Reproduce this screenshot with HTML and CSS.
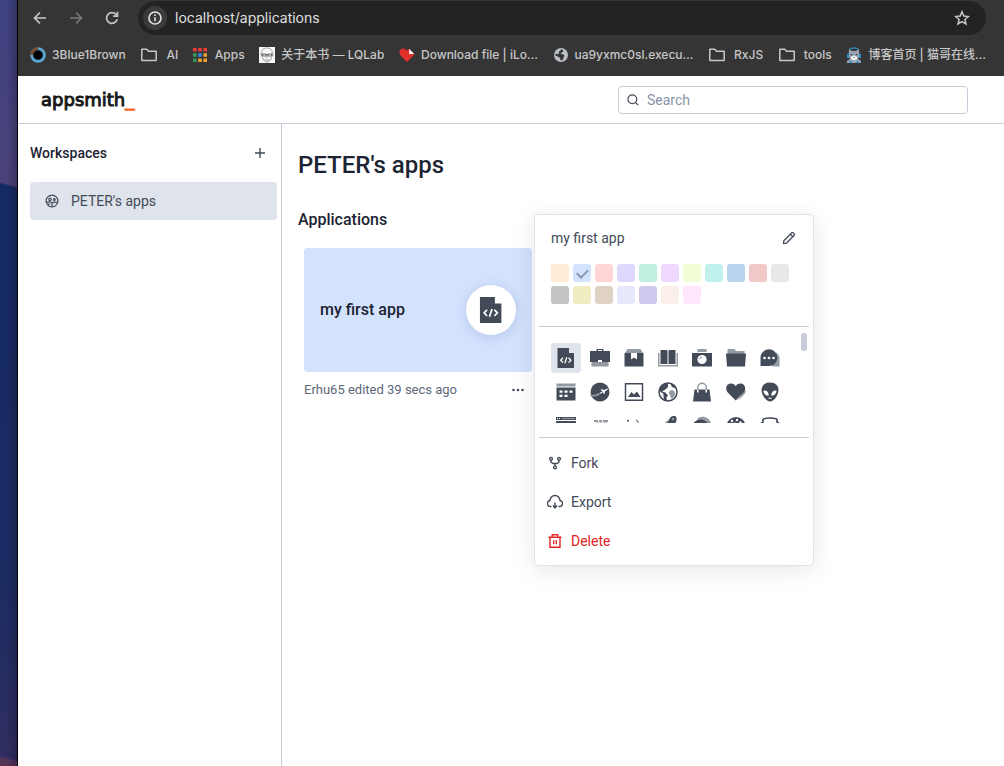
FILE: index.html
```html
<!DOCTYPE html>
<html lang="en">
<head>
<meta charset="utf-8">
<meta name="viewport" content="width=device-width, initial-scale=1">
<title>Applications | Appsmith</title>
<link rel="stylesheet" href="styles.css">
</head>
<body>
<div class="desktop" aria-hidden="true"></div>
<div class="window">
  <div class="chrome">
    <div class="toolbar">
      <div class="nav-group">
        <button class="nav-btn" aria-label="Back"><svg width="16" height="16" viewBox="0 0 16 16" fill="none" stroke="currentColor" stroke-width="1.7"><path d="M14 8H3M8 2.5 2.5 8 8 13.5"/></svg></button>
        <button class="nav-btn nav-btn-off" aria-label="Forward" disabled><svg width="16" height="16" viewBox="0 0 16 16" fill="none" stroke="currentColor" stroke-width="1.7"><path d="M2 8h11M8 2.5 13.5 8 8 13.5"/></svg></button>
        <button class="nav-btn" aria-label="Reload"><svg width="16" height="16" viewBox="0 0 16 16" fill="none" stroke="currentColor" stroke-width="1.7"><path d="M13.2 9.3A5.4 5.4 0 1 1 11.8 4.2L13.4 5.8"/><path d="M13.5 1.8v4.4H9.1"/></svg></button>
      </div>
      <div class="omnibox">
        <button class="site-info" aria-label="Site information"><svg width="14" height="14" viewBox="0 0 14 14" fill="none" stroke="currentColor" stroke-width="1.6"><circle cx="7" cy="7" r="6"/><path d="M7 6.2v4M7 3.6v1.5"/></svg></button>
        <input class="address" aria-label="Address" value="localhost/applications">
        <button class="star" aria-label="Bookmark this tab"><svg width="16" height="16" viewBox="0 0 16 16" fill="none" stroke="currentColor" stroke-width="1.5"><path d="m8 1.8 1.8 4.3 4.6.4-3.5 3 1.1 4.5L8 11.6 4 14l1.1-4.5-3.5-3 4.6-.4z"/></svg></button>
      </div>
    </div>
    <nav class="bookmarks" aria-label="Bookmarks">
      <a href="#"><svg width="16" height="16" viewBox="0 0 16 16"><circle cx="8" cy="8" r="6.300" fill="#000" stroke="#5aa7cf" stroke-width="3"/><path d="M1.700 8A6.300 6.300 0 0 1 8 1.700" fill="none" stroke="#7b4a2b" stroke-width="3"/><circle cx="8" cy="8" r="4.600" fill="#000" stroke="#173447"/></svg>3Blue1Brown</a>
      <a href="#" class="folder"><svg width="18" height="16" viewBox="0 0 18 16" fill="none" stroke="currentColor" stroke-width="1.5"><path d="M1.800 2.300h5l1.700 2h7.700v9.200H1.800z" stroke-linejoin="round"/></svg>AI</a>
      <a href="#" class="folder"><svg width="14" height="14" viewBox="0 0 14 14"><path fill="#ea3b34" d="M0 0h3.600v3.600H0zM5.200 0h3.600v3.600H5.200zM10.400 0H14v3.600h-3.600z"/><path fill="#2f9a57" d="M0 5.200h3.600v3.600H0zM0 10.400h3.600V14H0z"/><path fill="#3b82e8" d="M5.200 5.200h3.600v3.600H5.200z"/><path fill="#f0a030" d="M10.400 5.200H14v3.600h-3.600zM5.200 10.400h3.600V14H5.200zM10.400 10.400H14V14h-3.600z"/></svg>Apps</a>
      <a href="#"><svg width="16" height="16" viewBox="0 0 16 16"><path fill="#f8f8f8" d="M0 0h16v16H0z"/><g fill="none" stroke="#777" stroke-width=".7"><path d="M3 8C1.800 3 4.500 1 8 1s6.200 2 5 7c-.3 4-2.500 7-5 7s-4.700-3-5-7zM1.500 6.500l1.500 3M14.500 6.500 13 9.500M5.500 12.500c2 1 3 1 5 0M8 8l-.5 2.500h1.200"/><path stroke="#333" d="M3 7h4v2H4zM9 7h4l-1 2H9zM7 7.500h2"/></g></svg>关于本书 — LQLab</a>
      <a href="#"><svg width="16" height="16" viewBox="0 0 16 16"><path fill="#e2302c" d="M8 15 1.500 8.500C-.8 5.500.7 1.500 4 1.500c2 0 3.200 1 4 2.300.6-1.200 1.400-1.800 2.300-2.100L15.500 7 14 9z"/><path fill="#fff" d="M10.200 2v4.900h5z"/></svg>Download file | iLo…</a>
      <a href="#"><svg width="16" height="16" viewBox="0 0 16 16"><circle cx="8" cy="8" r="7" fill="#b9bec5"/><path fill="#353535" d="M7.500 2.200c2 .2 3 1 2.600 2.200-.4 1-2 .8-2.400 1.700-.3.900 1.500 1 2.700 1.400 1.300.5 1 1.700.4 2.500-.6.900-.4 2.100-1.400 2.900C8 13.600 7 13 7.200 11.900c.2-1-.7-1.300-1.500-1.800C4.600 9.400 3.300 9 2.200 8l.2-1.300c1.200.1 2.400 1 3.300.3.500-.5-.2-1.200.1-2C6.200 4 7.700 4 7.600 3.200z"/></svg>ua9yxmc0sl.execu…</a>
      <a href="#" class="folder"><svg width="18" height="16" viewBox="0 0 18 16" fill="none" stroke="currentColor" stroke-width="1.5"><path d="M1.800 2.300h5l1.700 2h7.700v9.200H1.800z" stroke-linejoin="round"/></svg>RxJS</a>
      <a href="#" class="folder"><svg width="18" height="16" viewBox="0 0 18 16" fill="none" stroke="currentColor" stroke-width="1.5"><path d="M1.800 2.300h5l1.700 2h7.700v9.200H1.800z" stroke-linejoin="round"/></svg>tools</a>
      <a href="#"><svg width="16" height="16" viewBox="0 0 16 16"><path d="M3.500 2Q8 0 12.500 2" fill="none" stroke="#2a86b0" stroke-width="1.3"/><path fill="#9aa4b5" d="m3 2 3 2h4l3-2 .5 7L12 12l3 2v2H1v-2l3-2-1.500-3z"/><path fill="#2491c4" d="M1 7h2v4H1zM13 7h2v4h-2zM3.500 14h2v2h-2zM10.500 14h2v2h-2z"/><path fill="#f4f5f8" d="m5 10 3-1.500 3 1.500v2l-3 1.500L5 12z"/><path fill="#262b35" d="M4.800 7h1.500v1.300H4.800zM9.700 7h1.500v1.300H9.700zM7.400 10h1.200v.8H7.400z"/></svg>博客首页 | 猫哥在线…</a>
    </nav>
  </div>

  <header class="app-header">
    <a class="logo" href="#">appsmith<span>_</span></a>
    <label class="search">
      <svg width="12" height="12" viewBox="0 0 12 12" fill="none" stroke="currentColor" stroke-width="1.2"><circle cx="5.300" cy="5.300" r="4.400"/><path d="m8.500 8.500 2.700 2.700"/></svg>
      <input type="search" placeholder="Search" aria-label="Search">
    </label>
  </header>

  <div class="app-body">
    <aside class="sidebar">
      <div class="sidebar-head">
        <h2>Workspaces</h2>
        <button class="add" aria-label="Create workspace"><svg width="12" height="12" viewBox="0 0 12 12" stroke="currentColor" stroke-width="1.4"><path d="M6 1v10M1 6h10"/></svg></button>
      </div>
      <a class="workspace" href="#"><svg width="14" height="14" viewBox="0 0 14 14" fill="none" stroke="currentColor" stroke-width="1.2"><circle cx="7" cy="7" r="5.900"/><circle cx="5" cy="5.400" r="1.200"/><circle cx="9.300" cy="5.600" r=".9"/><path d="M1.500 8.400c2-.6 5-.9 5.500 1v3.200M12.500 8.500c-2-.5-4-.6-5 .6M3.200 11l1.200-1.600"/></svg>PETER's apps</a>
    </aside>

    <main class="content">
      <h1>PETER's apps</h1>
      <h2>Applications</h2>
      <article class="app">
        <div class="card">
          <h3>my first app</h3>
          <div class="card-icon"><svg width="26" height="26" viewBox="0 0 20 20"><use href="#i-code"/></svg></div>
        </div>
        <div class="card-foot">
          <span>Erhu65 edited 39 secs ago</span>
          <button class="more" aria-label="More options"><svg width="12" height="4" viewBox="0 0 12 4" fill="currentColor"><circle cx="1.500" cy="2" r="1.300"/><circle cx="6" cy="2" r="1.300"/><circle cx="10.500" cy="2" r="1.300"/></svg></button>
        </div>

        <div class="popover">
          <div class="name-row">
            <span>my first app</span>
            <button class="edit" aria-label="Rename"><svg width="14" height="14" viewBox="0 0 14 14" fill="none" stroke="currentColor" stroke-width="1.3" stroke-linejoin="round"><path d="m1.500 12.500.3-2.800 8-8c.4-.4.9-.4 1.300 0l1.200 1.200c.4.400.4.900 0 1.300l-8 8zM8.300 3.200l2.500 2.500"/></svg></button>
          </div>
          <div class="swatches" role="radiogroup" aria-label="Color">
            <input type="radio" name="color" class="swatch c1" aria-label="Color 1">
            <input type="radio" name="color" class="swatch c2" aria-label="Color 2" checked>
            <input type="radio" name="color" class="swatch c3" aria-label="Color 3">
            <input type="radio" name="color" class="swatch c4" aria-label="Color 4">
            <input type="radio" name="color" class="swatch c5" aria-label="Color 5">
            <input type="radio" name="color" class="swatch c6" aria-label="Color 6">
            <input type="radio" name="color" class="swatch c7" aria-label="Color 7">
            <input type="radio" name="color" class="swatch c8" aria-label="Color 8">
            <input type="radio" name="color" class="swatch c9" aria-label="Color 9">
            <input type="radio" name="color" class="swatch c10" aria-label="Color 10">
            <input type="radio" name="color" class="swatch c11" aria-label="Color 11">
            <input type="radio" name="color" class="swatch c12" aria-label="Color 12">
            <input type="radio" name="color" class="swatch c13" aria-label="Color 13">
            <input type="radio" name="color" class="swatch c14" aria-label="Color 14">
            <input type="radio" name="color" class="swatch c15" aria-label="Color 15">
            <input type="radio" name="color" class="swatch c16" aria-label="Color 16">
            <input type="radio" name="color" class="swatch c17" aria-label="Color 17">
            <input type="radio" name="color" class="swatch c18" aria-label="Color 18">
          </div>
          <div class="icon-picker">
            <div class="icon-grid">
              <button class="icon selected" aria-label="Code file"><svg viewBox="0 0 20 20"><g id="i-code"><path fill="#434b58" d="M1.500 0H13v5h5v15H1.500z"/><path d="m7 9.800-2.300 2.400L7 14.600M12.600 9.800l2.300 2.400-2.300 2.400M10.800 9.200l-2 6" fill="none" stroke="#fff" stroke-width="1.3"/></g></svg></button>
              <button class="icon" aria-label="Briefcase"><svg viewBox="0 0 20 20"><path class="lt" d="M1.500 14h17v4.500h-17z"/><path class="dk" d="M6.500 1h7v2H20v11h-8v-2H8v2H0V3h6.500zM8 2v1h4V2z" fill-rule="evenodd"/></svg></button>
              <button class="icon" aria-label="Box"><svg viewBox="0 0 20 20"><path class="lt" d="M3.500 1h13L19 5H1z"/><path class="dk" d="M.5 5h19v13.500H.5z"/><path class="wh" d="M7 5h6v6.500l-3-2-3 2z"/></svg></button>
              <button class="icon" aria-label="Book"><svg viewBox="0 0 20 20"><path class="lt" d="M0 5h1.500v12h17V5H20v13.500H0z"/><path class="dk" d="M2.500 2h5.500c1 0 1.500.4 1.500 1v13h-7zM17.500 2H12c-1 0-1.500.4-1.500 1v13h7z"/></svg></button>
              <button class="icon" aria-label="Camera"><svg viewBox="0 0 20 20"><path class="lt" d="M5.500 1h9v3h-9z"/><path class="dk" d="M0 5h20v13.500H0z"/><circle class="wh" cx="10" cy="11.500" r="4.600"/><path d="M7.700 11.500A2.300 2.300 0 0 1 10 9.200" fill="none" stroke="#939aa3"/></svg></button>
              <button class="icon" aria-label="Folder"><svg viewBox="0 0 20 20"><path class="lt" d="M1.500 1h7l1.500 2h8.500v3h-17z"/><path class="dk" d="M0 5.500h20L19 18.500H1z"/></svg></button>
              <button class="icon" aria-label="Chat"><svg viewBox="0 0 20 20"><path class="lt" d="M16 4.500c3 1.500 3.800 4.500 3.500 7V18.500H12z"/><path class="dk" d="M.5 18V10A8.400 8.400 0 1 1 9 18z"/><g class="wh"><circle cx="4.500" cy="10" r="1.300"/><circle cx="9" cy="10" r="1.300"/><circle cx="13.500" cy="10" r="1.300"/></g></svg></button>

              <button class="icon" aria-label="Calendar"><svg viewBox="0 0 20 20"><path class="lt" d="M.5 1.500h19v3H.5z"/><path class="dk" d="M.5 5.500h19v13H.5z"/><path class="wh" d="M8.500 8.500h3v2.300h-3zM13.500 8.500h3v2.300h-3zM3.500 12.800h3v2.300h-3zM8.500 12.800h3v2.300h-3zM3.500 8.500h3v2.300h-3z"/></svg></button>
              <button class="icon" aria-label="Flight"><svg viewBox="0 0 20 20"><circle class="dk" cx="10" cy="10" r="9.500"/><path class="lt" d="M0 12.500c4 1 6 0 9-1.500l1 1.500C7 14.500 4 15 0 14z"/><path class="wh" d="m9.500 11 3-1.800-2-1.400 1-.6 3 .8 2.300-1.200c1.200-.4 1.500.5.700 1L15.300 9l-.8 2.700-1 .6-.2-2.300-2.800 1.800z"/></svg></button>
              <button class="icon" aria-label="Image"><svg viewBox="0 0 20 20"><path d="M1.500 1.800h17v16.400h-17z" fill="none" stroke="#434b58" stroke-width="1.5"/><path class="dk" d="m4 15 3.500-5 2.500 2.500 3-3L16.500 15z"/></svg></button>
              <button class="icon" aria-label="Globe"><svg viewBox="0 0 20 20"><circle cx="10" cy="10" r="9" fill="#fff" stroke="#434b58" stroke-width="1.5"/><path class="dk" d="M10 1c-4 0-8 3-9 7l2 2.500 2 .5.500 2.500L6 18l3 1-.5-3.500 1.500-2-2.500-3L4 9.500l3-1.800L10 5zM12 1l2 4 4 1.500C17 3.500 15 2 12 1z"/><path class="lt" d="M12 8.500c3-1 5 .5 5 3 0 2-2 5-4 5l-1-3.500-1.500-2z"/></svg></button>
              <button class="icon" aria-label="Shopping bag"><svg viewBox="0 0 20 20"><path d="M5.800 10V5.500a4.200 4.200 0 0 1 8.400 0V10" fill="none" stroke="#939aa3" stroke-width="1.5"/><path class="dk" d="M2.500 7.500h15L19 19.500H1z"/><path class="wh" d="M5 7.500h1.500v3H5zM13.500 7.500H15v3h-1.500z"/></svg></button>
              <button class="icon" aria-label="Heart"><svg viewBox="0 0 20 20"><path class="lt" d="M17 10.500 20 8c0 3-2 5-9 11z"/><path class="dk" d="M9.700 18.500 2 10.800C-1.500 7 .5 1.500 5 1.500c2.300 0 3.800 1 4.700 2.700 1-1.700 2.400-2.700 4.700-2.700 4.500 0 6.500 5.500 3 9.300z"/></svg></button>
              <button class="icon" aria-label="Alien"><svg viewBox="0 0 20 20"><path class="dk" d="M10 .5c5.500 0 8.500 3.500 8.500 7.500C18.500 13 14 19.500 10 19.500S1.500 13 1.500 8C1.500 4 4.500.5 10 .5z"/><path class="wh" d="M3.500 8.500c3-.5 5.300 1.500 5.300 5-3.300.3-5.300-2-5.300-5zM16.500 8.500c-3-.5-5.300 1.500-5.300 5 3.300.3 5.300-2 5.300-5zM8 15.800h4l-.8 1H8.800z"/></svg></button>

              <button class="icon" aria-label="Browser"><svg viewBox="0 0 20 20"><path class="dk" d="M0 1h20v3H0z"/><path class="wh" d="M1 2h1v1H1zM3 2h1v1H3z"/><path class="lt" d="M6 2h13v1H6z"/><path class="dk" d="M0 5h20v13H0z"/></svg></button>
              <button class="icon" aria-label="Blocks"><svg viewBox="0 0 20 20"><path class="lt" d="M4 4h4v2H4zM9 4h3v2H9zM13 4h5v2h-5zM6 6.500h3V9H6zM10 6.500h3V9h-3zM14 6.500h3V9h-3z"/></svg></button>
              <button class="icon" aria-label="Shapes"><svg viewBox="0 0 20 20"><path class="dk" d="M3 4h2v1.500H3z"/><path d="M12 4c2 1 3 3 2.500 6" fill="none" stroke="#939aa3" stroke-width="1.5"/></svg></button>
              <button class="icon" aria-label="Rocket"><svg viewBox="0 0 20 20"><path class="lt" d="M7 7c1-2 3-3 5-3l-2 6H5z"/><path class="dk" d="M17 0c-3-.5-5 1-6 4l-2 4 5 4 4-6c1-3 1-5-1-6z"/><circle class="lt" cx="15" cy="3" r="1.300"/></svg></button>
              <button class="icon" aria-label="Coins"><svg viewBox="0 0 20 20"><path class="lt" d="M5 3c5-4.500 13-2 14.500 6H16z"/><circle class="dk" cx="8.500" cy="12" r="8.500"/></svg></button>
              <button class="icon" aria-label="Cookie"><svg viewBox="0 0 20 20"><circle class="dk" cx="10" cy="10.500" r="9.500"/><g class="wh"><circle cx="6" cy="5" r="1.200"/><circle cx="11" cy="4" r="1.200"/><circle cx="14.500" cy="6.500" r="1.200"/><circle cx="4" cy="8" r="1"/><circle cx="9" cy="7.500" r="1"/></g></svg></button>
              <button class="icon" aria-label="Jersey"><svg viewBox="0 0 20 20"><path d="M3 3q7-2 14 0M3 3v3L1 7.500M17 3v3l2 1.500" fill="none" stroke="#434b58" stroke-width="1.7"/></svg></button>
            </div>
            <div class="thumb"></div>
          </div>
          <div class="menu">
            <button class="menu-item"><svg width="16" height="16" viewBox="0 0 16 16" fill="none" stroke="currentColor" stroke-width="1.4"><circle cx="4" cy="3.800" r="1.400"/><circle cx="12" cy="3.800" r="1.400"/><circle cx="8" cy="12.500" r="1.400"/><path d="M4 5.300v1.800l2 1.400h4l2-1.400V5.300M8 8.500V11"/></svg>Fork</button>
            <button class="menu-item"><svg width="16" height="16" viewBox="0 0 16 16" fill="none" stroke="currentColor" stroke-width="1.4"><path d="M4.500 12.500H4a3 3 0 0 1-1-6 5 5 0 0 1 10 0 3 3 0 0 1-1 6h-.5M8 8.500v5M6 11.500 8 14l2-2.500"/></svg>Export</button>
            <button class="menu-item danger"><svg width="16" height="16" viewBox="0 0 16 16" fill="none" stroke="currentColor" stroke-width="1.4"><path d="M1.500 4.300h13M5.200 4V1.700h5.600V4M3 4.300v9.900h10V4.300M6.700 7.300v4M9.300 7.300v4"/></svg>Delete</button>
          </div>
        </div>
      </article>
    </main>
  </div>
</div>
</body>
</html>
```

FILE: styles.css
```css
* {
  box-sizing: border-box;
}

body {
  margin: 0;
  display: flex;
  min-height: 100vh;
  font-family: Roboto, "Noto Sans CJK SC", sans-serif;
  font-size: 14px;
  line-height: 20px;
  color: #434b58;
  background: #fff;
}

h1, h2, h3 {
  margin: 0;
  font-weight: 500;
  color: #1c2433;
}

button {
  display: flex;
  align-items: center;
  justify-content: center;
  padding: 0;
  border: 0;
  background: none;
  color: inherit;
  font: inherit;
}

input {
  font: inherit;
}

a {
  color: inherit;
  text-decoration: none;
}

svg {
  display: block;
  flex: none;
}

.desktop {
  flex: none;
  width: 18px;
  border-right: 1px solid #000;
  background:
    linear-gradient(90deg, transparent 40%, rgba(20, 15, 35, 0.3)),
    linear-gradient(195deg, #3f4381 0, #47427c 130px, #4a4278 180px, #142a63 182px, #1b2c63 560px, #302e60 734px, #54355c 736px, #50334f 100%);
}

.window {
  flex: 1;
  min-width: 0;
  display: flex;
  flex-direction: column;
}

/* Browser chrome */
.chrome {
  background: #353535;
  color: #c7c7c7;
  font-family: Inter, "Noto Sans CJK SC", sans-serif;
}

.toolbar {
  display: flex;
  align-items: center;
  gap: 18px;
  padding: 1px 18px 0 14px;
}

.nav-group {
  display: flex;
  gap: 20px;
}

.nav-btn {
  width: 16px;
  height: 16px;
}

.nav-btn-off {
  color: #7a7a7a;
}

.omnibox {
  flex: 1;
  display: flex;
  align-items: center;
  gap: 8px;
  height: 34px;
  padding: 0 16px 0 5px;
  border-radius: 17px;
  background: #232323;
}

.site-info {
  width: 24px;
  height: 24px;
  border-radius: 50%;
  background: #3b3b3b;
  color: #e3e3e3;
}

.address {
  flex: 1;
  min-width: 0;
  padding: 0;
  border: 0;
  outline: 0;
  background: none;
  color: #e0e0e0;
}

.bookmarks {
  display: flex;
  justify-content: space-between;
  height: 41px;
  padding: 0 18px 1px 12px;
  font-size: 12px;
  font-weight: 500;
  white-space: nowrap;
  overflow: hidden;
}

.bookmarks a {
  display: flex;
  align-items: center;
  gap: 6px;
}

.bookmarks .folder {
  gap: 8px;
}

/* Application header */
.app-header {
  display: flex;
  align-items: center;
  justify-content: space-between;
  height: 48px;
  padding: 0 36px 0 23px;
  border-bottom: 1px solid #c6cdd9;
}

.logo {
  font-family: "DejaVu Sans", sans-serif;
  font-size: 18px;
  color: #191919;
  -webkit-text-stroke: 1px #191919;
  paint-order: stroke fill;
}

.logo span {
  color: #f86a2b;
  -webkit-text-stroke-color: #f86a2b;
}

.search {
  display: flex;
  align-items: center;
  gap: 8px;
  width: 350px;
  height: 28px;
  padding: 0 8px;
  border: 1px solid #c6cdd9;
  border-radius: 4px;
}

.search input {
  flex: 1;
  min-width: 0;
  padding: 0;
  border: 0;
  outline: 0;
  background: none;
}

.search input::placeholder {
  color: #8a94a6;
}

.app-body {
  flex: 1;
  display: flex;
}

.sidebar {
  flex: none;
  width: 264px;
  padding: 19px 4px 0 12px;
  border-right: 1px solid #c6cdd9;
}

.sidebar-head {
  display: flex;
  align-items: center;
  justify-content: space-between;
  padding-right: 11px;
}

.sidebar-head h2 {
  font-size: 14px;
}

.workspace {
  display: flex;
  align-items: center;
  gap: 12px;
  height: 38px;
  margin-top: 19px;
  padding: 0 15px;
  border-radius: 4px;
  background: #dfe3eb;
}

.content {
  flex: 1;
  min-width: 0;
  padding: 25px 16px;
}

.content h1 {
  font-size: 24px;
  line-height: 32px;
}

.content h2 {
  margin-top: 29px;
  font-size: 16px;
}

.app {
  position: relative;
  width: 228px;
  margin: 18px 6px 0;
}

.card {
  display: flex;
  align-items: center;
  justify-content: space-between;
  height: 124px;
  padding: 0 16px;
  border-radius: 4px;
  background: #d3e2fd;
}

.card h3 {
  font-size: 16px;
}

.card-icon {
  display: grid;
  place-items: center;
  width: 50px;
  height: 50px;
  border-radius: 50%;
  background: #fff;
  box-shadow: 0 2px 12px rgba(70, 90, 150, 0.2);
}

.card-foot {
  display: flex;
  align-items: center;
  justify-content: space-between;
  margin-top: 8px;
  padding-right: 8px;
  font-size: 13px;
  color: #5d6878;
}

.more {
  color: #434b58;
}

/* Card options menu */
.popover {
  position: absolute;
  top: -34px;
  left: 230px;
  width: 280px;
  padding: 13px 4px 5px;
  border: 1px solid #dfe3ec;
  border-radius: 4px;
  background: #fff;
  box-shadow: 0 4px 24px rgba(0, 0, 0, 0.1);
}

.name-row {
  display: flex;
  align-items: center;
  justify-content: space-between;
  padding: 0 13px 0 12px;
}

.swatches {
  display: flex;
  flex-wrap: wrap;
  gap: 4px;
  padding: 16px 12px 22px;
  border-bottom: 1px solid #c6cdd9;
}

.swatch {
  appearance: none;
  display: grid;
  place-items: center;
  width: 18px;
  height: 18px;
  margin: 0;
  border-radius: 3px;
}

.swatch:checked::after {
  content: "";
  width: 9px;
  height: 5px;
  margin-bottom: 2px;
  border: solid #8896ae;
  border-width: 0 0 2px 2px;
  rotate: -45deg;
}

.c1 { background: #ffebd6; }
.c2 { background: #d3e2fd; }
.c3 { background: #ffd6d8; }
.c4 { background: #dfd8fd; }
.c5 { background: #bff0df; }
.c6 { background: #eed8fd; }
.c7 { background: #f2fdd8; }
.c8 { background: #c0f1ed; }
.c9 { background: #bad4ed; }
.c10 { background: #f1c8c8; }
.c11 { background: #e8e8e8; }
.c12 { background: #c4c4c4; }
.c13 { background: #f0edc2; }
.c14 { background: #dfd1c3; }
.c15 { background: #e6e9fc; }
.c16 { background: #d0c8ec; }
.c17 { background: #faf0e9; }
.c18 { background: #ffe6fa; }

.icon-picker {
  display: flex;
  justify-content: space-between;
  height: 111px;
  padding: 6px 2px 14px 12px;
  border-bottom: 1px solid #c6cdd9;
}

.icon-grid {
  display: grid;
  grid-template-columns: repeat(7, 30px);
  grid-auto-rows: 30px;
  gap: 4px;
  padding-top: 10px;
  overflow: hidden;
}

.icon {
  border-radius: 4px;
}

.icon.selected {
  background: #dfe3eb;
}

.icon svg {
  width: 20px;
  height: 20px;
}

.dk { fill: #434b58; }
.lt { fill: #939aa3; }
.wh { fill: #fff; }

.thumb {
  width: 6px;
  height: 18px;
  border-radius: 3px;
  background: #c6cdd9;
}

.menu {
  padding-top: 5px;
}

.menu-item {
  gap: 8px;
  justify-content: flex-start;
  width: 100%;
  height: 39px;
  padding: 0 8px;
}

.danger {
  color: #e32525;
}
```
